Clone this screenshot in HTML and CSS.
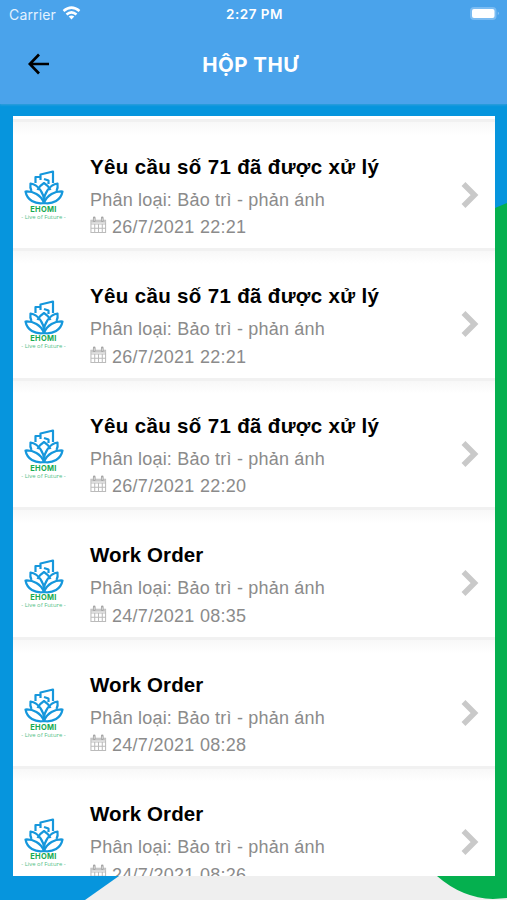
FILE: index.html
```html
<!DOCTYPE html>
<html lang="vi">
<head>
<meta charset="utf-8">
<meta name="viewport" content="width=device-width, initial-scale=1">
<title>Hộp thư</title>
<link rel="stylesheet" href="styles.css">
</head>
<body>
<svg class="defs" width="0" height="0" aria-hidden="true">
  <symbol id="lotus" viewBox="0 0 40 35">
    <g fill="none" stroke="#1597dc" stroke-width="2.200" stroke-linejoin="round">
      <path d="M11.500 13V7H16M16.500 10V4.500L29 1.500V13M20 9L24.500 10.500V14"/>
      <path d="M13.500 20C15 17 17.500 14.500 20 13C22.500 14.500 25 17 26.500 20"/>
      <path d="M20 31C20 24 15 15 6.500 13.500C6 16.500 6.500 19 7.500 21M20 31C20 24 25 15 33.500 13.500C34 16.500 33.500 19 32.500 21"/>
      <path d="M20 33C17 25 9 21 1.500 21.500C3 30 11 34.500 20 33ZM20 33C23 25 31 21 38.500 21.500C37 30 29 34.500 20 33Z"/>
    </g>
  </symbol>
  <symbol id="calendar" viewBox="0 0 18 18">
    <path d="M1 4h15.500v13H1zM1 8h15.500M1 12.500h15.500M5 8v9M9 8v9M13 8v9" fill="none" stroke="#bbb" stroke-width="1.100"/>
    <path d="M1 4h15.500v2.500H1z" fill="#c6c6c6"/>
    <path d="M4.500 1.500v3M13 1.500v3" stroke="#a5a5a5" stroke-width="2.800" stroke-linecap="round"/>
    <path d="M4.500 2v2.500M13 2v2.500" stroke="#e6e6e6" stroke-width="1"/>
  </symbol>
  <symbol id="chevron" viewBox="0 0 18 28">
    <path d="M2.500 3L13.500 14L2.500 25" fill="none" stroke="#c9c9c9" stroke-width="5.500"/>
  </symbol>
</svg>
<div class="screen">
  <svg class="backdrop" viewBox="0 0 507 900" aria-hidden="true">
    <path d="M0 0H507V900H0Z" fill="#efefef"/>
    <path d="M0 0H507V500L119 876L85 900H0Z" fill="#0695dd"/>
    <path d="M507 203L495 208L400 260V820Q412 860 437 876Q462 898 493 899L507 898Z" fill="#05b04f"/>
  </svg>
  <header class="header">
    <div class="status">
      <div class="carrier"><span>Carrier</span>
        <svg class="wifi" viewBox="0 0 18 14"><g fill="none" stroke="#fff" stroke-width="2.500"><path d="M1 5Q9-1.800 17 5"/><path d="M4 8.500Q9 4.200 14 8.500"/></g><path d="M6.200 10.600Q9 8.500 11.800 10.600L9 13.500Z" fill="#fff"/></svg>
      </div>
      <div class="clock">2:27 PM</div>
      <svg class="battery" viewBox="0 0 31 15"><rect x="1" y="0" width="26.500" height="13" rx="4" fill="#7bbcf2"/><rect x="3" y="2" width="22.500" height="9" rx="2" fill="#fff"/><path d="M28.800 4.500Q31 6.300 28.800 8Z" fill="#91c7f5"/></svg>
    </div>
    <div class="nav">
      <svg class="back" viewBox="0 0 22 22"><path d="M11 1.500L1.800 11L11 20.500M2 11H21" fill="none" stroke="#000" stroke-width="2.700"/></svg>
      <h1>HỘP THƯ</h1>
    </div>
  </header>
  <main class="list" id="list">
    <template id="row">
      <article class="row">
        <div class="logo"><svg class="lotus"><use href="#lotus"/></svg><b>EHOMI</b><small>- Live of Future -</small></div>
        <div class="text"><h2></h2><p>Phân loại: Bảo trì - phản ánh</p><div class="date"><svg class="calendar"><use href="#calendar"/></svg><time></time></div></div>
        <svg class="chevron"><use href="#chevron"/></svg>
      </article>
    </template>
  </main>
</div>
<script src="script.js"></script>
</body>
</html>
```
FILE: styles.css
```css
* { box-sizing: border-box; margin: 0; }
body { font-family: "Liberation Sans", Arial, sans-serif; }
.defs { position: absolute; }
.screen { position: relative; width: 507px; height: 900px; overflow: hidden; display: flex; flex-direction: column; }
.backdrop { position: absolute; inset: 0; z-index: -1; width: 507px; height: 900px; }
.header { height: 104px; background: #4aa3eb; box-shadow: 0 1px 2px #379edb; color: #fff; flex: none; }
.status { height: 28px; padding: 0 7px 0 9px; display: grid; grid-template-columns: 1fr auto 1fr; align-items: center; font-family: Inter, sans-serif; font-size: 13.500px; }
.carrier { display: flex; align-items: center; gap: 6px; color: #e3f2ff; font-size: 14px; letter-spacing: .15px; }
.wifi { width: 19px; height: 14px; margin-top: -2px; }
.clock { font-weight: 600; letter-spacing: .5px; }
.battery { width: 31px; height: 15px; justify-self: end; }
.nav { height: 74px; display: grid; grid-template-columns: 50px 1fr 50px; align-items: center; padding: 0 0 2px; }
.back { width: 22px; height: 22px; margin-left: 28px; }
h1 { font: 700 20.500px Inter, sans-serif; text-align: center; letter-spacing: .45px; padding-right: 6px; }
.list { flex: none; width: 482px; height: 760px; margin: 12px 0 0 13px; padding-top: 2.500px; overflow: hidden; background: #fff; }
.row { height: 129.500px; display: flex; align-items: flex-start; border-top: 3px solid #f1f1f1; background: linear-gradient(#f8f8f8, #fff 13px); }
.logo { width: 61px; padding-top: 48.500px; display: flex; flex-direction: column; align-items: center; }
.lotus { width: 40px; height: 35px; }
.logo b { font: 700 7.500px/8px Inter, sans-serif; color: #16aa52; letter-spacing: .3px; margin-top: .5px; }
.logo small { font: 5.900px/7px "Open Sans", sans-serif; color: #50bd84; white-space: nowrap; }
.text { width: 373px; padding: 32px 0 0 16px; white-space: nowrap; }
h2 { font-size: 20.500px; line-height: 26px; color: #000; letter-spacing: .1px; }
h2.vietnamese { letter-spacing: .34px; }
.text p { font-size: 18px; line-height: 22px; margin-top: 9px; color: #8b8b8b; letter-spacing: .2px; }
.date { display: flex; align-items: center; font-size: 18px; line-height: 22px; margin-top: 5.500px; gap: 5px; color: #8b8b8b; letter-spacing: .28px; }
.calendar { width: 17px; height: 18px; margin-top: -4px; }
.chevron { width: 18px; height: 28px; margin: 59px 0 0 14px; }
```
FILE: script.js
```js
const rows = [
  ["Yêu cầu số 71 đã được xử lý", "26/7/2021 22:21"],
  ["Yêu cầu số 71 đã được xử lý", "26/7/2021 22:21"],
  ["Yêu cầu số 71 đã được xử lý", "26/7/2021 22:20"],
  ["Work Order", "24/7/2021 08:35"],
  ["Work Order", "24/7/2021 08:28"],
  ["Work Order", "24/7/2021 08:26"]
];
const list = document.getElementById("list");
const template = document.getElementById("row");
for (const [title, date] of rows) {
  const row = template.content.cloneNode(true);
  const heading = row.querySelector("h2");
  heading.textContent = title;
  heading.classList.toggle("vietnamese", title.startsWith("Yêu"));
  row.querySelector("time").textContent = date;
  list.append(row);
}
```
